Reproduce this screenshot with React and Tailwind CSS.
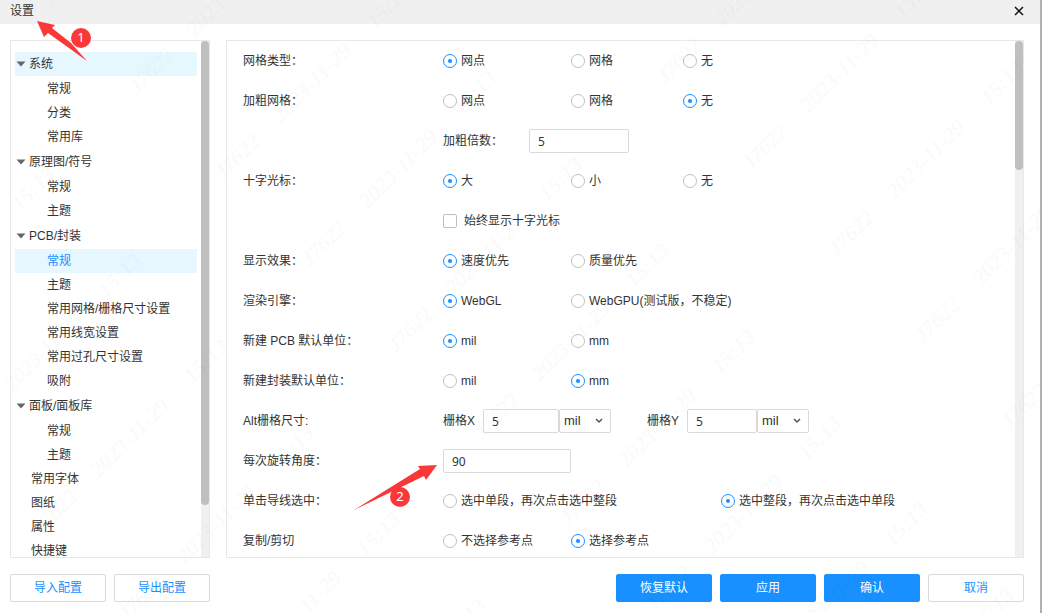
import React, { useState } from "react";

const tree = [
  {
    label: "系统",
    highlighted: true,
    children: ["常规", "分类", "常用库"],
  },
  { label: "原理图/符号", children: ["常规", "主题"] },
  {
    label: "PCB/封装",
    children: [
      "常规",
      "主题",
      "常用网格/栅格尺寸设置",
      "常用线宽设置",
      "常用过孔尺寸设置",
      "吸附",
    ],
  },
  { label: "面板/面板库", children: ["常规", "主题"] },
  { label: "常用字体" },
  { label: "图纸" },
  { label: "属性" },
  { label: "快捷键" },
];

const Scrollbar = ({ thumb }) => (
  <div className="w-2 shrink-0 bg-[#f0f0f0]">
    <div className={`w-2 rounded-full bg-[#bfbfbf] ${thumb}`} />
  </div>
);

const Sidebar = () => {
  const [selected, setSelected] = useState("PCB/封装-常规");

  return (
    <aside className="flex w-[200px] shrink-0 border border-[#e8e8e8]">
      <nav className="min-w-0 flex-1 overflow-y-auto px-1 pt-[10px] [scrollbar-width:none]">
        {tree.map((node) =>
          node.children ? (
            <div key={node.label}>
              <button
                type="button"
                className={`my-px flex h-6 w-full items-center gap-[3px] pl-px text-left ${
                  node.highlighted ? "bg-[#e6f7ff]" : ""
                }`}
              >
                <svg width="10" height="6" viewBox="0 0 10 6">
                  <path d="M0.5 0.5h9L5 5.5z" fill="#666" />
                </svg>
                {node.label}
              </button>
              {node.children.map((child) => {
                const key = `${node.label}-${child}`;
                return (
                  <button
                    key={key}
                    type="button"
                    onClick={() => setSelected(key)}
                    className={`block h-6 w-full pl-8 text-left whitespace-nowrap ${
                      selected === key ? "bg-[#e6f7ff] text-[#1890ff]" : ""
                    }`}
                  >
                    {child}
                  </button>
                );
              })}
            </div>
          ) : (
            <button
              key={node.label}
              type="button"
              className="block h-6 w-full pl-4 text-left"
            >
              {node.label}
            </button>
          )
        )}
      </nav>
      <Scrollbar thumb="h-[90%]" />
    </aside>
  );
};

const Row = ({ label, children }) => (
  <div className="flex h-10 items-center">
    <div className="w-[200px] shrink-0">{label}</div>
    {children}
  </div>
);

const RadioRow = ({ label, name, options, checked, widths }) => {
  const [value, setValue] = useState(checked);

  return (
    <Row label={label}>
      {options.map((option, i) => (
        <label
          key={option}
          className={`flex shrink-0 items-center gap-1 whitespace-nowrap ${
            widths?.[i] || (i === 0 ? "w-32" : i === 1 ? "w-28" : "")
          }`}
        >
          <input
            type="radio"
            name={name}
            checked={value === option}
            onChange={() => setValue(option)}
            className="grid size-[14px] shrink-0 appearance-none place-content-center rounded-full border border-[#bfbfbf] bg-white before:size-1 before:rounded-full checked:border-[#1890ff] checked:before:bg-[#1890ff]"
          />
          {option}
        </label>
      ))}
    </Row>
  );
};

const NumberInput = ({ id, value, width, ...rest }) => (
  <input
    id={id}
    type="text"
    defaultValue={value}
    className={`h-6 rounded-xs border border-[#d9d9d9] bg-white px-2 font-['Noto_Sans',sans-serif] outline-none ${width}`}
    {...rest}
  />
);

const UnitSelect = ({ label }) => (
  <div className="relative">
    <select
      aria-label={label}
      defaultValue="mil"
      className="block h-6 w-[52px] appearance-none rounded-xs border border-[#d9d9d9] bg-white pl-1 text-[13px] outline-none"
    >
      <option>mil</option>
      <option>mm</option>
    </select>
    <svg
      width="8"
      height="6"
      viewBox="0 0 8 6"
      className="pointer-events-none absolute top-[9px] right-2"
    >
      <path d="M1 1l3 3 3-3" fill="none" stroke="#555" strokeWidth="1.5" />
    </svg>
  </div>
);

const SettingsPanel = () => (
  <section className="flex min-w-0 flex-1 border border-[#e8e8e8]">
    <div className="min-w-0 flex-1 overflow-x-hidden overflow-y-auto px-4 [scrollbar-width:none]">
      <RadioRow
        label="网格类型："
        name="gridType"
        options={["网点", "网格", "无"]}
        checked="网点"
      />
      <RadioRow
        label="加粗网格："
        name="boldGrid"
        options={["网点", "网格", "无"]}
        checked="无"
      />
      <Row label="">
        <label htmlFor="boldFactor" className="w-[86px]">
          加粗倍数：
        </label>
        <NumberInput id="boldFactor" value="5" width="w-[100px]" />
      </Row>
      <RadioRow
        label="十字光标："
        name="cursor"
        options={["大", "小", "无"]}
        checked="大"
      />
      <Row label="">
        <label className="flex items-center gap-[7px]">
          <input
            type="checkbox"
            className="size-[14px] appearance-none rounded-xs border border-[#bfbfbf] bg-white checked:border-[#1890ff] checked:bg-[#1890ff]"
          />
          始终显示十字光标
        </label>
      </Row>
      <RadioRow
        label="显示效果："
        name="display"
        options={["速度优先", "质量优先"]}
        checked="速度优先"
      />
      <RadioRow
        label="渲染引擎："
        name="engine"
        options={["WebGL", "WebGPU(测试版，不稳定)"]}
        checked="WebGL"
      />
      <RadioRow
        label="新建 PCB 默认单位："
        name="pcbUnit"
        options={["mil", "mm"]}
        checked="mil"
      />
      <RadioRow
        label="新建封装默认单位："
        name="footprintUnit"
        options={["mil", "mm"]}
        checked="mm"
      />
      <Row label="Alt栅格尺寸:">
        <label htmlFor="gridX" className="w-10">
          栅格X
        </label>
        <NumberInput id="gridX" value="5" width="w-[76px]" />
        <UnitSelect label="栅格X单位" />
        <label htmlFor="gridY" className="ml-9 w-10">
          栅格Y
        </label>
        <NumberInput id="gridY" value="5" width="w-[70px]" />
        <UnitSelect label="栅格Y单位" />
      </Row>
      <Row label={<label htmlFor="rotateAngle">每次旋转角度：</label>}>
        <NumberInput id="rotateAngle" value="90" width="w-32" />
      </Row>
      <RadioRow
        label="单击导线选中："
        name="trackSelect"
        options={[
          "选中单段，再次点击选中整段",
          "选中整段，再次点击选中单段",
        ]}
        checked="选中整段，再次点击选中单段"
        widths={["w-[278px]", "w-auto"]}
      />
      <RadioRow
        label="复制/剪切"
        name="copyCut"
        options={["不选择参考点", "选择参考点"]}
        checked="选择参考点"
      />
    </div>
    <Scrollbar thumb="h-1/4" />
  </section>
);

const Button = ({ primary, children }) => (
  <button
    type="button"
    className={`h-7 w-24 rounded-xs border ${
      primary
        ? "border-[#1890ff] bg-[#1890ff] text-white"
        : "border-[#d9d9d9] bg-white text-[#1890ff]"
    }`}
  >
    {children}
  </button>
);

const Watermark = () => (
  <svg
    className="pointer-events-none absolute inset-0 size-full"
    aria-hidden="true"
  >
    <defs>
      <pattern
        id="watermark"
        width="380"
        height="122"
        patternUnits="userSpaceOnUse"
        patternTransform="rotate(-45)"
      >
        <g
          className="font-['Liberation_Serif',serif] text-[22px] italic"
          fill="#000"
          fillOpacity="0.025"
          textAnchor="middle"
        >
          <text x="57" y="42">J7622</text>
          <text x="162" y="42">2023-11-29</text>
          <text x="270" y="42">15:13</text>
        </g>
      </pattern>
    </defs>
    <rect width="100%" height="100%" fill="url(#watermark)" />
  </svg>
);

// Numbered red arrows that point at the title and the rotation field
const Annotations = () => (
  <svg className="pointer-events-none absolute inset-0 size-full">
    <g fill="#fb3838">
      <path d="M37 21L55 25L52 28L71 43L87 61L48 33L44 37Z" />
      <circle cx="81" cy="38" r="10" />
      <path d="M437 465L418 466L420 469L354 510L424 476L426 480Z" />
      <circle cx="400" cy="497" r="10" />
    </g>
    <g
      className="font-['Noto_Sans',sans-serif] text-[13px]"
      fill="#fff"
      textAnchor="middle"
    >
      <text x="81" y="42">1</text>
      <text x="400" y="501">2</text>
    </g>
  </svg>
);

const App = () => {
  return (
    <div className="relative flex h-screen flex-col overflow-hidden border-r-2 border-[#b0b0b0] bg-white font-['Liberation_Sans','Noto_Sans_CJK_SC',sans-serif] text-xs text-[#333]">
      <header className="flex h-6 shrink-0 items-center justify-between bg-[#f0f0f0] pr-4 pb-0.5 pl-[10px]">
        <h1>设置</h1>
        <button type="button" aria-label="关闭">
          <svg width="10" height="10" viewBox="0 0 10 10">
            <path d="M1 1l8 8M9 1l-8 8" stroke="#111" strokeWidth="1.5" />
          </svg>
        </button>
      </header>

      <main className="flex min-h-0 flex-1 gap-4 pt-4 pr-4 pl-[10px]">
        <Sidebar />
        <SettingsPanel />
      </main>

      <footer className="flex shrink-0 gap-2 pt-4 pr-4 pb-[11px] pl-[10px]">
        <Button>导入配置</Button>
        <Button>导出配置</Button>
        <div className="flex-1" />
        <Button primary>恢复默认</Button>
        <Button primary>应用</Button>
        <Button primary>确认</Button>
        <Button>取消</Button>
      </footer>

      <Watermark />
      <Annotations />
    </div>
  );
};

export default App;
